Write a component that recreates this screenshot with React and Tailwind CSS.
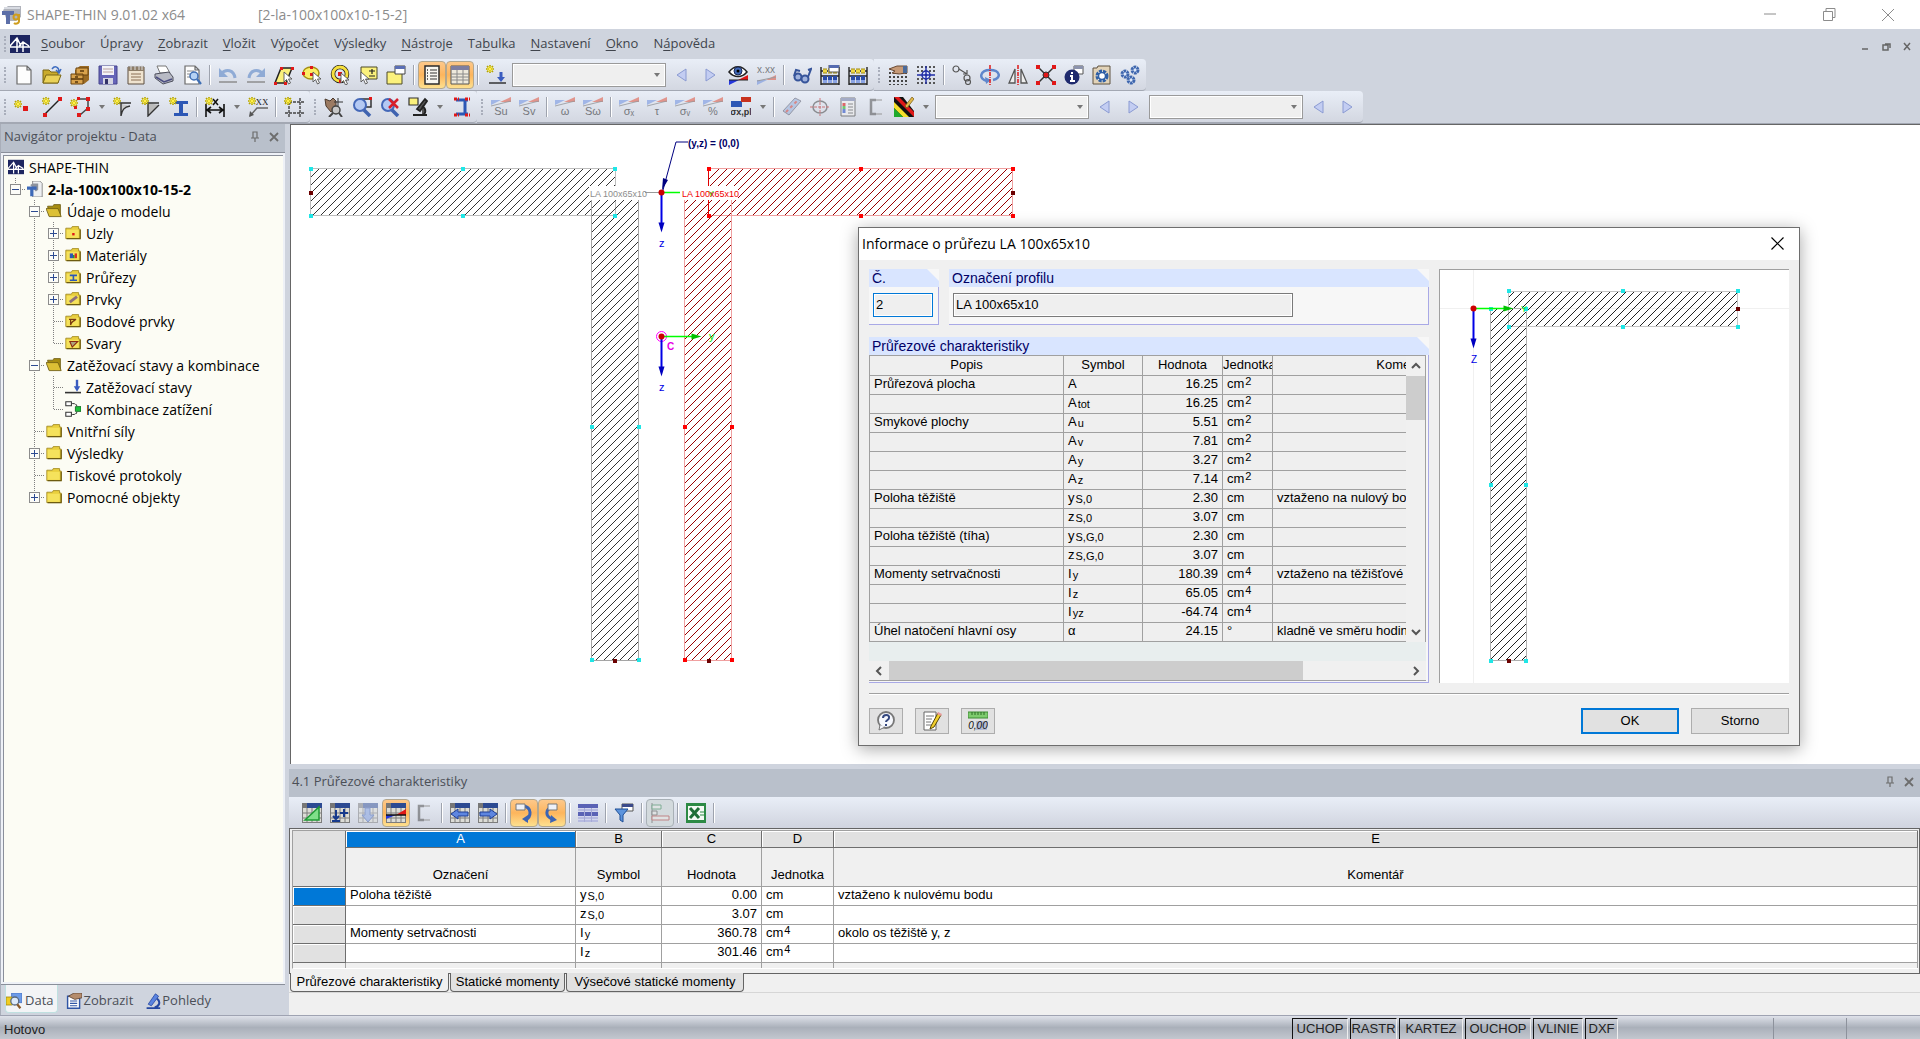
import React from "react";
import clsx from "clsx";

/* ─── ICON ART (20 x 20 grid) ─── */

const Spark = ({ x = 0, y = 0 }) => (
  <g transform={`translate(${x} ${y})`}>
    <path d="M4 0v8M0 4h8M1 1l6 6M7 1L1 7" stroke="#b5a400" strokeWidth="1.6" />
    <path d="M4 1v6M1 4h6M2 2l4 4M6 2L2 6" stroke="#fff04a" strokeWidth="1" />
  </g>
);

const Cursor = ({ x = 10, y = 8 }) => (
  <path
    transform={`translate(${x} ${y})`}
    d="M0 0v10l2.500-2.500L4.500 12l2-1-2-4H8z"
    fill="#fff"
    stroke="#555"
    strokeWidth="0.9"
  />
);

const Sheet = ({ fill = "#fdfdfd" }) => (
  <path d="M3 1h10l4 4v14H3zM13 1v4h4" fill={fill} stroke="#6b6b6b" strokeWidth="1.2" />
);

const Wedge = () => (
  <>
    <path d="M0 8V3h10z" fill="#6d8fe0" />
    <path d="M9 5l11-5v5z" fill="#e0523c" />
    <path d="M0 9l20-5" stroke="#555" strokeWidth="0.8" />
  </>
);

const Result = ({ children }) => (
  <g opacity="0.55">
    <Wedge />
    <text x="10" y="18" textAnchor="middle" fontSize="11" fontFamily="Liberation Sans, sans-serif" fill="#222">
      {children}
    </text>
  </g>
);

const GridBack = ({ y = 6 }) => (
  <path
    d={`M1 ${y}h18M1 ${y + 4}h18M1 ${y + 8}h18M1 ${y + 12}h18`}
    stroke="#444"
    strokeWidth="2"
    strokeDasharray="2 2"
  />
);

const Abacus = () => (
  <>
    <path d="M1 2v18M19 2v18M1 6h18M1 11h18M1 19h18" stroke="#222" strokeWidth="1.400" />
    <path d="M3 6h14" stroke="#a08a10" strokeWidth="5" strokeDasharray="4 1" />
    <path d="M3 6h14" stroke="#f0d848" strokeWidth="3" strokeDasharray="4 1" />
    <path d="M3 13h14" stroke="#2a4ca8" strokeWidth="4" strokeDasharray="4 1" />
    <path d="M3 16.500h14" stroke="#8ba4e4" strokeWidth="3" strokeDasharray="4 1" />
  </>
);

const TableArt = ({ children, faded }) => (
  <g opacity={faded ? 0.5 : 1}>
    <path d="M0 0h20v20H0z" fill="#dcdcd6" />
    <path d="M0 10h20M0 15h20M5 5v15M10 5v15M15 5v15M.5 0v20M19.500 0v20M0 19.500h20" stroke="#7d7d7d" strokeWidth="1" />
    <path d="M0 0h20v5H0z" fill="#2c4a92" />
    <path d="M0 0h5v5H0z" fill="#777" />
    {children}
  </g>
);

const art = {
  newFile: <Sheet />,
  open: (
    <>
      <path d="M1 5h6l2 2h7v11H1z" fill="#c9ab2c" stroke="#7a6714" />
      <path d="M4 10h15l-3 8H1z" fill="#ead258" stroke="#7a6714" />
      <path d="M10 4c3-4 7-2 7 3M14 5l3 3 2-4" fill="none" stroke="#3d6cc0" strokeWidth="1.500" />
    </>
  ),
  blocks: (
    <>
      <path d="M5 5l5-4h9v14l-5 4H5z" fill="#9a6a24" />
      <path d="M1 9h12v10H1zM6 3h12v7H6z" fill="#d9a24c" stroke="#6b4511" />
      <path d="M1 14h12M5 12h3M5 17h3M10 6h4" stroke="#5a390c" strokeWidth="1.300" />
    </>
  ),
  save: (
    <>
      <path d="M1 1h18v18H1z" fill="#6665b8" stroke="#46458d" />
      <path d="M4 1h12v9H4z" fill="#f3f3f8" />
      <path d="M5 4h10M5 7h10" stroke="#b9a0a0" />
      <path d="M5 13h10v6H5z" fill="#d5d5e2" />
      <path d="M7 14h3v5H7z" fill="#333268" />
    </>
  ),
  report: (
    <>
      <path d="M2 2h16v17H2z" fill="#efe3cf" stroke="#5d4f40" />
      <path d="M2 2h16v4H2z" fill="#8d7d68" />
      <path d="M5 0v5M9 0v5M13 0v5M16 0v5" stroke="#ddd" />
      <path d="M5 9h10M5 12h10M5 15h10" stroke="#8a6f55" />
    </>
  ),
  print: (
    <>
      <path d="M3 1h9l4 7H6z" fill="#fff" stroke="#777" />
      <path d="M1 9l14-2 4 5v4l-10 3-8-6z" fill="#b8bac4" stroke="#4d4f5c" />
      <path d="M2 12l8 5 8-3" fill="none" stroke="#4b4d80" strokeWidth="1.500" />
    </>
  ),
  preview: (
    <>
      <Sheet />
      <path d="M5 6h7M5 9h5M5 12h4" stroke="#888" />
      <circle cx="12" cy="11" r="4" fill="#b5d2f4" stroke="#3f6fb5" strokeWidth="1.500" />
      <path d="M15 14l4 5" stroke="#3f6fb5" strokeWidth="2.200" />
    </>
  ),
  undo: (
    <g opacity="0.7">
      <path d="M3 9c5-6 13-4 14 4" fill="none" stroke="#6f94cc" strokeWidth="3" />
      <path d="M1 3v9h9z" fill="#6f94cc" />
      <path d="M1 17h18" stroke="#888" strokeWidth="2" />
    </g>
  ),
  redo: (
    <g opacity="0.7">
      <path d="M17 9C12 3 4 5 3 13" fill="none" stroke="#6f94cc" strokeWidth="3" />
      <path d="M19 3v9h-9z" fill="#6f94cc" />
      <path d="M1 17h18" stroke="#888" strokeWidth="2" />
    </g>
  ),
  selPoly: (
    <>
      <path d="M7 3h11l-6 15H1z" fill="#fbf17c" stroke="#222" strokeWidth="1.500" />
      <path d="M6 2h3v3H6zM17 2h3v3h-3zM0 17h3v3H0zM10 17h3v3h-3z" fill="#e01818" />
      <Cursor x={10} y={7} />
    </>
  ),
  selCircle: (
    <>
      <ellipse cx="9" cy="8" rx="8" ry="6" fill="#fbee65" stroke="#a69012" strokeWidth="1.500" />
      <path d="M8 1h3v3H8zM0 7h3v3H0zM8 8h3v3H8z" fill="#e01818" />
      <Cursor x={11} y={7} />
    </>
  ),
  selRing: (
    <>
      <circle cx="10" cy="9" r="7" fill="none" stroke="#222" strokeWidth="4.500" />
      <circle cx="10" cy="9" r="7" fill="none" stroke="#f6e03d" strokeWidth="3" />
      <path d="M8 7h4v4H8zM9 15h3v3H9z" fill="#e01818" />
      <Cursor x={11} y={8} />
    </>
  ),
  selPlus: (
    <>
      <path d="M3 2h16v12H3z" fill="#fbf17c" stroke="#4c4b2a" />
      <path d="M14 4v5M11 6h6M11 11h6" stroke="#222" strokeWidth="1.200" />
      <Cursor x={3} y={7} />
    </>
  ),
  copyWin: (
    <>
      <path d="M1 7h15v12H1z" fill="#fbf17c" stroke="#4c4b2a" />
      <path d="M9 1h10v8H9z" fill="#fff" stroke="#444" />
      <path d="M9 1h10v3H9z" fill="#5b6fb5" />
    </>
  ),
  navList: (
    <>
      <path d="M3 1h14v18H3z" fill="#f8f6f0" stroke="#2b2b2b" strokeWidth="1.500" />
      <path d="M8 5h7M8 8h7M8 11h7M8 14h7" stroke="#333" />
      <path d="M5 5h1M5 8h1M5 11h1M5 14h1" stroke="#333" strokeWidth="1.500" />
    </>
  ),
  tables: (
    <>
      <path d="M1 1h18v18H1z" fill="#eee9dc" stroke="#555" />
      <path d="M1 1h18v4H1z" fill="#7e7ea0" />
      <path d="M1 9h18M1 12h18M1 15h18M7 5v14M13 5v14" stroke="#8a8a8a" />
    </>
  ),
  newLoad: (
    <>
      <Spark />
      <path d="M15 7v6" stroke="#3a5cc0" strokeWidth="3" />
      <path d="M11 12h8l-4 5z" fill="#3a5cc0" />
      <path d="M3 18h17" stroke="#333" strokeWidth="1.500" />
    </>
  ),
  prev: <path d="M14 4v12L5 10z" fill="#c3cdf2" stroke="#8a9ad2" />,
  next: <path d="M6 4v12l9-6z" fill="#c3cdf2" stroke="#8a9ad2" />,
  showResults: (
    <>
      <path d="M1 7c5-7 13-7 18 0-5 6-13 6-18 0z" fill="#fff" stroke="#222" strokeWidth="1.500" />
      <circle cx="10" cy="6" r="4" fill="#4068b5" stroke="#1c2b5a" />
      <circle cx="10" cy="6" r="1.500" fill="#000" />
      <path d="M1 20v-5h10z" fill="#2436dd" />
      <path d="M10 15l10-5v5z" fill="#e01818" />
      <path d="M1 15h19" stroke="#222" />
    </>
  ),
  values: (
    <g opacity="0.55">
      <text x="10" y="8" textAnchor="middle" fontSize="10" fontFamily="Liberation Sans, sans-serif" fill="#222">x.xx</text>
      <path d="M1 20v-5h10z" fill="#6d8fe0" />
      <path d="M10 15l10-5v5z" fill="#e0523c" />
      <path d="M1 16l19-4" stroke="#666" />
    </g>
  ),
  glasses: (
    <g fill="none" stroke="#36549a" strokeWidth="2">
      <circle cx="6" cy="12" r="3.500" fill="#9fb2dd" />
      <circle cx="13" cy="14" r="3.500" fill="#9fb2dd" />
      <path d="M2 11L4 5l4 1M16 12l3-8-3 1" />
    </g>
  ),
  abacusWin: (
    <>
      <Abacus />
      <path d="M9 0h10v7H9z" fill="#fff" stroke="#555" />
      <path d="M9 0h10v3H9z" fill="#556bb0" />
    </>
  ),
  abacus: <Abacus />,
  gridHand: (
    <>
      <GridBack y={8} />
      <path d="M1 4l8-3 10 0v7l-8 1-7-1 3-2z" fill="#c69a78" stroke="#6b4a34" />
      <path d="M15 1h4v7h-4z" fill="#4a6a9a" />
    </>
  ),
  gridSnap: (
    <>
      <path d="M1 2h18M1 6h18M1 14h18M1 18h18" stroke="#555" strokeWidth="2" strokeDasharray="2 2" />
      <circle cx="10" cy="10" r="4" fill="#dfe4fa" stroke="#1f2da5" strokeWidth="1.500" />
      <path d="M10 1v18M1 10h18" stroke="#1f2da5" strokeWidth="1.400" />
      <circle cx="10" cy="10" r="1.300" fill="#1f2da5" />
    </>
  ),
  moveCopy: (
    <g fill="none" stroke="#555" strokeWidth="1.200">
      <circle cx="4" cy="4" r="3" />
      <circle cx="15" cy="13" r="3" />
      <circle cx="16" cy="17" r="2.500" />
      <path d="M7 4l8 5M15 5v4h-4" />
    </g>
  ),
  rotate: (
    <>
      <path d="M7 16C-2 14 0 5 10 5s12 8 3 10" fill="none" stroke="#5f86cc" strokeWidth="2.500" />
      <path d="M5 12l6 3-5 4z" fill="#5f86cc" />
      <path d="M10 0v20" stroke="#e01818" strokeWidth="1.500" strokeDasharray="4 1 1 1" />
    </>
  ),
  mirror: (
    <>
      <path d="M7 4v14H1zM13 4v14h6z" fill="#eee" stroke="#555" strokeWidth="1.300" />
      <path d="M10 0v20" stroke="#e01818" strokeWidth="1.500" strokeDasharray="4 1 1 1" />
    </>
  ),
  split: (
    <>
      <path d="M2 2l16 16M18 2L2 18" stroke="#333" strokeWidth="1.500" />
      <path d="M0 0h4v4H0zM16 0h4v4h-4zM0 16h4v4H0zM16 16h4v4h-4z" fill="#e01818" />
      <circle cx="10" cy="10" r="3" fill="#e01818" stroke="#333" />
    </>
  ),
  info: (
    <>
      <path d="M10 1h9v8h-9z" fill="#fff" stroke="#555" />
      <path d="M10 1h9v3h-9z" fill="#8c93ad" />
      <circle cx="8" cy="12" r="7.500" fill="#1f2a6e" />
      <path d="M8 7v2M6 11h2v5M6 16h5" stroke="#fff" strokeWidth="2" fill="none" />
    </>
  ),
  settings: (
    <>
      <path d="M1 3h4l1-2h12v18H1z" fill="#e2d3b8" stroke="#5f5240" />
      <circle cx="10" cy="11" r="5" fill="#fff" stroke="#2f5fa5" strokeWidth="3" strokeDasharray="3 1" />
      <circle cx="10" cy="11" r="3.500" fill="none" stroke="#2f5fa5" strokeWidth="1.500" />
    </>
  ),
  gears: (
    <g fill="#dfe9fa" stroke="#3e66ae">
      <circle cx="5" cy="9" r="3" strokeWidth="3" strokeDasharray="2.500 0.600" />
      <circle cx="15" cy="5" r="3" strokeWidth="3" strokeDasharray="2.500 0.600" />
      <circle cx="11" cy="15" r="3" strokeWidth="3" strokeDasharray="2.500 0.600" />
    </g>
  ),
  newNode: (
    <>
      <Spark y={3} />
      <path d="M9 9h5v5H9z" fill="#e01818" />
    </>
  ),
  newLine: (
    <>
      <path d="M3 17L18 2" stroke="#222" strokeWidth="1.500" />
      <Spark />
      <path d="M1 16h4v4H1zM16 0h4v4h-4z" fill="#e01818" />
    </>
  ),
  newPoly: (
    <>
      <path d="M9 2h9v9l-8 7" fill="none" stroke="#444" strokeWidth="1.500" />
      <Spark y={2} />
      <path d="M7 0h3v3H7zM16 0h4v4h-4zM16 10h4v4h-4zM7 16h4v4H7zM4 9h3v3H4z" fill="#e01818" />
    </>
  ),
  newPoint: (
    <>
      <path d="M5 6h13M5 6h3v13c1-6 3-9 9-10" fill="#ccc" stroke="#333" strokeWidth="1.400" />
      <Spark />
    </>
  ),
  newWeld: (
    <>
      <path d="M3 6h15M7 6v13L18 8" fill="#bbb" stroke="#333" strokeWidth="1.400" />
      <Spark />
    </>
  ),
  newSection: (
    <>
      <path d="M5 4h14v3h-5v9h5v3H5v-3h5V7H5z" fill="#2c57b5" />
      <Spark />
    </>
  ),
  dimension: (
    <>
      <path d="M1 7v13M19 7v13M2 13h16M6 10l-4 3 4 3M14 10l4 3-4 3" fill="none" stroke="#111" strokeWidth="1.600" />
      <path d="M8 2l5 6M13 2L8 8" stroke="#111" strokeWidth="1.500" />
      <Spark />
    </>
  ),
  comment: (
    <>
      <path d="M2 19L9 11h11" fill="none" stroke="#666" strokeWidth="1.400" />
      <path d="M1 20l1-6 4 4z" fill="#555" />
      <text x="14" y="8" textAnchor="middle" fontSize="9" fontFamily="Liberation Serif, serif" fill="#222">XX</text>
      <Spark />
    </>
  ),
  guide: (
    <>
      <path d="M5 1v19M16 1v19M1 5h19M1 16h19" stroke="#444" strokeWidth="1.400" strokeDasharray="3 1" />
      <Spark />
    </>
  ),
  zoomHand: (
    <>
      <path d="M1 2l5 2 3-3 3 3v8l-5 3-5-6z" fill="#9b7a62" stroke="#4d3b2e" />
      <path d="M14 1v9M10 5h9" stroke="#333" />
      <circle cx="12" cy="13" r="4" fill="#c8c8c8" stroke="#444" strokeWidth="1.500" />
      <path d="M15 16l3 4M9 16l-4 4" stroke="#444" strokeWidth="2" />
    </>
  ),
  zoomWindow: (
    <>
      <path d="M9 2h10v8H9z" fill="none" stroke="#333" strokeWidth="1.500" />
      <circle cx="8" cy="8" r="6" fill="#b4c9f3" stroke="#4468b8" strokeWidth="2" />
      <path d="M12 13l6 6" stroke="#3f63b0" strokeWidth="3.500" />
      <path d="M17 0h3v3h-3z" fill="#e01818" />
    </>
  ),
  zoomAll: (
    <>
      <circle cx="8" cy="8" r="6" fill="#b4c9f3" stroke="#4468b8" strokeWidth="2" />
      <path d="M12 13l6 6" stroke="#3f63b0" strokeWidth="3.500" />
      <path d="M9 2l9 9M18 2L9 11" stroke="#d81f2a" strokeWidth="2.500" />
    </>
  ),
  microscope: (
    <>
      <path d="M1 1h9v7H1z" fill="#fbf17c" stroke="#333" strokeWidth="1.200" />
      <path d="M9 12l8-10 2 2-7 10zM14 9c5 3 4 8 0 9M5 18h14" fill="#555" stroke="#222" strokeWidth="1.800" />
    </>
  ),
  sectionRed: (
    <>
      <path d="M5 3h12M5 17h12M14 3v14" stroke="#2c57b5" strokeWidth="3" />
      <path d="M3 2h5M14 2h5M3 18h5M14 18h5" stroke="#e01818" strokeWidth="3" strokeDasharray="3 1" />
    </>
  ),
  su: <Result>Su</Result>,
  sv: <Result>Sv</Result>,
  omega: <Result>ω</Result>,
  sOmega: <Result>Sω</Result>,
  sigmaX: <Result>σₓ</Result>,
  tau: <Result>τ</Result>,
  sigmaV: <Result>σᵥ</Result>,
  percent: <Result>%</Result>,
  sigmaPl: (
    <>
      <path d="M0 4h11v6H0z" fill="#2c57b5" />
      <path d="M10 0h10v5H10z" fill="#c8321e" />
      <text x="10" y="18" textAnchor="middle" fontSize="9" fontWeight="bold" fontFamily="Liberation Sans, sans-serif" fill="#333">
        σx,pl
      </text>
    </>
  ),
  element: (
    <g opacity="0.6">
      <path d="M1 14L13 1l6 3L7 18z" fill="#9cb4dc" stroke="#667" />
      <path d="M4 15L16 3" stroke="#d14a42" strokeWidth="2" strokeDasharray="3 3" />
    </g>
  ),
  target: (
    <g opacity="0.6" fill="none" stroke="#555">
      <ellipse cx="10" cy="10" rx="7" ry="6" strokeWidth="1.500" />
      <path d="M10 1v18M0 10h20" stroke="#c03030" strokeDasharray="3 1" />
    </g>
  ),
  legend: (
    <g opacity="0.7">
      <path d="M3 1h14v18H3z" fill="#eee" stroke="#555" />
      <path d="M3 1h14v3H3z" fill="#8a93b5" />
      <path d="M6 6v3" stroke="#d33" strokeWidth="3" />
      <path d="M6 9v3" stroke="#4b4" strokeWidth="3" />
      <path d="M6 12v4" stroke="#46c" strokeWidth="3" />
      <path d="M10 7h5M10 10h5M10 13h5M10 16h5" stroke="#666" />
    </g>
  ),
  channel: (
    <g opacity="0.5">
      <path d="M10 3H5v14h5" fill="none" stroke="#444" strokeWidth="2.500" />
      <path d="M10 3h6M10 17h6" stroke="#999" strokeWidth="2" />
    </g>
  ),
  colors: (
    <>
      <path d="M0 0h20v20H0z" fill="#111" />
      <path d="M0 0h5l15 15v5z" fill="#e01818" />
      <path d="M0 5l15 15H9L0 11z" fill="#f5e02c" />
      <path d="M0 11l9 9H0z" fill="#1faa2c" />
      <path d="M9 0h11v14z" fill="#e4e7ef" />
      <path d="M11 9l7-9 2 2-7 9z" fill="#e0b84a" stroke="#765a14" strokeWidth="0.700" />
    </>
  ),
  tblEdit: <TableArt><path d="M3 17L17 4v13z" fill="#7fe08a" stroke="#1f9a35" strokeWidth="1.500" /></TableArt>,
  tblInsert: (
    <TableArt>
      <path d="M6 7v9M3 13l3 3 3-3M2 18h8M14 6v8M10 10h8" stroke="#173a8c" strokeWidth="2" fill="none" />
    </TableArt>
  ),
  tblDown: <TableArt faded><path d="M7 5h5v7h4l-6 7-6-7h3z" fill="#7f9de0" stroke="#3f5fae" /></TableArt>,
  tblGraph: (
    <TableArt>
      <path d="M0 16v-4h10z" fill="#2436dd" />
      <path d="M10 12l10-6v6z" fill="#e01818" />
      <path d="M0 12h20" stroke="#111" strokeWidth="1.500" />
    </TableArt>
  ),
  tblPrev: <TableArt><path d="M1 11l7-5v3h10v4H8v3z" fill="#5e86e0" stroke="#1f3f96" /></TableArt>,
  tblNext: <TableArt><path d="M19 11l-7-5v3H2v4h10v3z" fill="#5e86e0" stroke="#1f3f96" /></TableArt>,
  syncIn: (
    <>
      <path d="M9 3c9 1 9 11 2 14" fill="none" stroke="#3c64b4" strokeWidth="3" />
      <path d="M14 12l-6 4 6 4z" fill="#3c64b4" />
      <path d="M2 1h9v6H2z" fill="#eef1f8" stroke="#777" />
    </>
  ),
  syncOut: (
    <>
      <path d="M11 4c-8 2-8 9-1 12" fill="none" stroke="#3c64b4" strokeWidth="3" />
      <path d="M8 20l7-3-6-5z" fill="#3c64b4" />
      <path d="M6 1h9v6H6z" fill="#eef1f8" stroke="#777" />
    </>
  ),
  rows: (
    <>
      <path d="M0 1h20v18H0z" fill="#d3d6ee" />
      <path d="M0 3h20M0 11h20" stroke="#5a62b5" strokeWidth="4" />
      <path d="M0 7h20M0 15h20M0 18h20" stroke="#9a9fd2" />
      <path d="M6.500 5v14M13.500 5v14" stroke="#a6aad6" />
    </>
  ),
  filter: (
    <>
      <path d="M8 1h11v7H8z" fill="#fff" stroke="#555" />
      <path d="M8 1h11v3H8z" fill="#3b4a8a" />
      <path d="M1 6h13l-5 6v7l-3-2v-5z" fill="#5c93dc" stroke="#1f4f96" />
    </>
  ),
  bars: (
    <g opacity="0.55" fill="#e9e9e9" stroke="#555">
      <path d="M2 0v20" />
      <path d="M2 2h9v4H2z" stroke="#3a8a5a" />
      <path d="M2 8h5v4H2z" />
      <path d="M2 13h17v4H2z" stroke="#b04040" />
    </g>
  ),
  excel: (
    <>
      <path d="M0 0h20v20H0z" fill="#2c8a45" />
      <path d="M2 3h16v14H2z" fill="#f4faf4" />
      <path d="M4 5l9 10M13 5L4 15" stroke="#1e6f36" strokeWidth="3" />
      <path d="M14 9h4M14 12h4" stroke="#2c8a45" />
    </>
  ),
  help: (
    <>
      <circle cx="10" cy="9" r="8" fill="#f5f7fc" stroke="#777" strokeWidth="1.800" />
      <path d="M4 14l-1 5 6-3" fill="#f5f7fc" stroke="#777" />
      <path d="M7 7c0-4 7-4 6 0 0 2-3 2-3 4M10 13v2" fill="none" stroke="#33477f" strokeWidth="2" />
    </>
  ),
  note: (
    <>
      <path d="M2 1h12v18H2z" fill="#fff" stroke="#666" />
      <path d="M4 5h8M4 8h6M4 11h5M4 14h6" stroke="#777" />
      <path d="M9 15L16 2l3 2-7 12-4 2z" fill="#f2cf2c" stroke="#57480a" />
      <path d="M16 1l4 2-1 2-4-2z" fill="#e79a9a" />
    </>
  ),
  units: (
    <>
      <path d="M0 1h20v6H0z" fill="#7ecb6e" stroke="#3d8c33" />
      <path d="M4 1v3M7 1v3M10 1v3M13 1v3M16 1v3" stroke="#2d6d25" />
      <path d="M8 10h11v9H8z" fill="#b4bbd6" />
      <text x="10" y="18" textAnchor="middle" fontSize="10" fontStyle="italic" fontFamily="Liberation Sans, sans-serif" fill="#111">
        0,00
      </text>
    </>
  ),
  bridge: (
    <>
      <path d="M0 1h20v18H0z" fill="#1d2560" />
      <path d="M0 13h20M7 4v14M0 12L7 4l4 8M13 8v10M9 12l4-4 6 4" fill="none" stroke="#fff" strokeWidth="1.500" />
    </>
  ),
  app: (
    <>
      <path d="M1 5l5-4h13v11l-5 4H5z" fill="#b0b3bb" />
      <path d="M0 6h12v4H8v9H4v-9H0z" fill="#5c6fa8" />
      <path d="M2 3h16" stroke="#d8dbe2" strokeWidth="2" />
      <circle cx="14" cy="12" r="2.500" stroke="#cf9d1c" strokeWidth="2" />
      <path d="M17 9v7c0 3-4 3-5 2" stroke="#cf9d1c" strokeWidth="2" />
    </>
  ),
  doc: (
    <>
      <path d="M7 0h9l3 3v17H7z" fill="#eef0f2" stroke="#777" />
      <path d="M4 5l3-2h7v8l-3 2z" fill="#8e939c" />
      <path d="M0 7h12v4H8v8H4v-8H0z" fill="#3d69b8" />
    </>
  ),
  folder: (
    <>
      <path d="M1 4h7l1-2h8v3h2v12H1z" fill="#e9cf3e" stroke="#9c8318" />
      <path d="M2 6h15v10H2z" fill="#f5e25c" />
      <path d="M2 17h17V6" fill="none" stroke="#6d5b10" strokeWidth="1.500" />
    </>
  ),
  folderOpen: (
    <>
      <path d="M2 4h6l2-2h8v14H4z" fill="#a68c10" stroke="#6a5910" />
      <path d="M0 7h15l4 10H4z" fill="#dcc035" stroke="#6a5910" />
    </>
  ),
  loadCase: (
    <>
      <path d="M15 1v9" stroke="#3a5cc0" strokeWidth="3" />
      <path d="M11 9h8l-4 7z" fill="#3a5cc0" />
      <path d="M0 17h20" stroke="#333" strokeWidth="2" />
    </>
  ),
  loadCombo: (
    <>
      <path d="M1 1h7v5H1zM1 14h7v5H1z" fill="#fff" stroke="#333" strokeWidth="1.300" />
      <path d="M9 3c4 0 6 2 6 4M9 17c4 0 6-2 6-4" fill="none" stroke="#333" strokeWidth="1.300" strokeDasharray="3 1" />
      <path d="M13 7h7v6h-7z" fill="#1fc03a" stroke="#0c5f1a" />
    </>
  ),
  navData: (
    <>
      <path d="M7 0h13v12H7z" fill="#6d9be8" stroke="#4470c0" />
      <path d="M0 5h8v10H0z" fill="#f0cd22" stroke="#a08510" />
      <circle cx="11" cy="10" r="5" fill="#dceafa" stroke="#5a6a80" strokeWidth="1.600" />
      <path d="M14 14l4 5" stroke="#8a5a2a" strokeWidth="2.800" />
    </>
  ),
  navDisplay: (
    <>
      <path d="M2 4h15v15H2z" fill="#fff" stroke="#2f55a5" strokeWidth="1.800" />
      <path d="M5 10h9M5 13h9M5 16h9" stroke="#2f55a5" strokeWidth="1.400" />
      <path d="M3 4l7-4h10v6l-9 2z" fill="#b58c6c" stroke="#5a4030" />
    </>
  ),
  navViews: (
    <>
      <path d="M4 14L13 1l4 3-9 12z" fill="#5a83e0" stroke="#2446a0" />
      <path d="M15 7c5 4 3 10-3 11M2 19h17" fill="none" stroke="#2446a0" strokeWidth="2.500" />
    </>
  ),
};

const folderMarks = {
  node: <path d="M9 10h3v3H9z" fill="#e01818" />,
  material: (
    <>
      <path d="M6 8h4v6H6z" fill="#2c57b5" />
      <path d="M10 10h2v4h-2z" fill="#1f9a35" />
      <path d="M12 8h3v6h-3z" fill="#d8321e" />
    </>
  ),
  section: <path d="M6 8h9M6 14h9M10.500 8v6" stroke="#2c57b5" strokeWidth="2" />,
  element: <path d="M6 14L15 7" stroke="#8d6f7c" strokeWidth="3.500" />,
  point: <path d="M5 8h9M7 8v7c1-4 3-5 6-6" fill="none" stroke="#7a3a10" strokeWidth="1.600" />,
  weld: <path d="M6 8h10L9 15z" fill="#b0a27c" stroke="#8a2a10" strokeWidth="1.300" />,
};

function Icon({ name, mark, small }) {
  return (
    <svg viewBox="0 0 20 20" className={clsx("shrink-0", small ? "size-4" : "size-5")} fill="none" aria-hidden="true">
      {art[name]}
      {mark && folderMarks[mark]}
    </svg>
  );
}

/* ─── TOOLBARS ─── */

const fileTools = [
  "grip", ["newFile", "Nový"], ["open", "Otevřít"], ["blocks", "Správce bloků"], ["save", "Uložit"],
  ["report", "Tiskový protokol"], ["print", "Tisk"], ["preview", "Náhled"], "sep",
  ["undo", "Zpět"], ["redo", "Znovu"], ["selPoly", "Výběr polygonem"], ["selCircle", "Výběr elipsou"],
  ["selRing", "Výběr prstencem"], ["selPlus", "Přidat k výběru"], ["copyWin", "Nové okno"], "sep",
  ["navList", "Navigátor", true], ["tables", "Tabulky", true], "sep",
  ["newLoad", "Nový zatěžovací stav"], { select: "Zatěžovací stav" }, ["prev", "Předchozí stav"], ["next", "Další stav"],
  ["showResults", "Zobrazit výsledky"], ["values", "Zobrazit hodnoty"], "sep",
  ["glasses", "Kontrola"], ["abacusWin", "Parametry výpočtu"], ["abacus", "Spočítat"],
];

const editTools = [
  "grip", ["gridHand", "Rastr"], ["gridSnap", "Uchopení"], "sep",
  ["moveCopy", "Posunout"], ["rotate", "Otočit"], ["mirror", "Zrcadlit"], ["split", "Rozdělit"],
  ["info", "Informace"], ["settings", "Nastavení zobrazení"], ["gears", "Možnosti"],
];

const drawTools = [
  "grip", ["newNode", "Nový uzel"], ["newLine", "Nový prvek"], ["newPoly", "Nová polylinie"], "drop",
  ["newPoint", "Nový bodový prvek"], ["newWeld", "Nový svar"], ["newSection", "Nový průřez"], "sep",
  ["dimension", "Kóta"], "drop", ["comment", "Komentář"], "sep", ["guide", "Vodicí linie"],
];

const viewTools = [
  "grip", ["zoomHand", "Posun a zoom"], ["zoomWindow", "Zoom oknem"], ["zoomAll", "Zobrazit vše"],
  ["microscope", "Pohled"], "drop", ["sectionRed", "Průřez"],
];

const resultTools = [
  "grip", ["su", "Su"], ["sv", "Sv"], "sep", ["omega", "Omega"], ["sOmega", "S omega"], "sep",
  ["sigmaX", "Sigma x"], ["tau", "Tau"], ["sigmaV", "Sigma v"], ["percent", "Využití"],
  ["sigmaPl", "Sigma x,pl"], "drop", "sep",
  ["element", "Prvky"], ["target", "Těžiště"], ["legend", "Legenda"], ["channel", "Obrys"], ["colors", "Barvy"], "drop",
  { select: "Výsledky" }, ["prev", "Předchozí výsledek"], ["next", "Další výsledek"],
  { select: "Místo" }, ["prev", "Předchozí místo"], ["next", "Další místo"],
];

const tableTools = [
  "pad", ["tblEdit", "Upravit"], ["tblInsert", "Vložit řádek"], ["tblDown", "Dolů"], ["tblGraph", "Grafika", true],
  ["channel", "Obrys profilu"], "sep", ["tblPrev", "Předchozí tabulka"], ["tblNext", "Další tabulka"], "sep",
  ["syncIn", "Synchronizace výběru", true], ["syncOut", "Synchronizace grafiky", true], "sep",
  ["rows", "Řádky"], "sep", ["filter", "Filtr"], "sep", ["bars", "Sloupce", "pressed"], "sep",
  ["excel", "Export do Excelu"], "sep",
];

function ToolItem({ item }) {
  if (item === "pad") return <div className="w-[9px]" />;
  if (item === "grip") {
    return <div className="ml-1 mr-1 h-4 w-0 border-l-2 border-dotted border-[#a9aebb]" />;
  }
  if (item === "sep") {
    return (
      <div className="flex w-2 justify-center">
        <div className="h-5 w-[2px] border-l border-[#9ea3ae] bg-white" />
      </div>
    );
  }
  if (item === "drop") {
    return (
      <button aria-label="Další volby" className="flex w-[15px] justify-center">
        <svg viewBox="0 0 6 4" className="h-1 w-1.5"><path d="M0 0h6L3 4z" fill="#777" /></svg>
      </button>
    );
  }
  if (item.select) {
    return (
      <div className="relative mx-0.5">
        <select
          aria-label={item.select}
          className="block h-6 w-[154px] appearance-none border border-[#9a9a9a] bg-[#efefef] shadow-[inset_0_0_0_1px_#fff]"
        />
        <svg viewBox="0 0 6 4" className="pointer-events-none absolute right-1.5 top-2.5 h-1 w-1.5">
          <path d="M0 0h6L3 4z" fill="#777" />
        </svg>
      </div>
    );
  }
  const [name, label, state] = item;
  return (
    <button
      aria-label={label}
      className={clsx(
        "flex h-7 w-7 items-center justify-center",
        state === true && "rounded-sm border border-[#b3a78e] bg-linear-to-b from-[#fdc88a] via-[#fdb55c] to-[#fde08e]",
        state === "pressed" && "rounded-sm border border-[#a8b0b6] bg-[#d3dadd]"
      )}
    >
      <Icon name={name} />
    </button>
  );
}

function Toolbar({ items }) {
  return (
    <div className="flex h-full items-center rounded-r border-b border-[#a3a8b3] bg-linear-to-b from-[#e9eef7] to-[#d3d7e1] pr-0.5">
      {items.map((item, i) => (
        <ToolItem key={i} item={item} />
      ))}
    </div>
  );
}

/* ─── MENU ─── */

const menu = [
  ["", "S", "oubor"], ["Úpr", "a", "vy"], ["", "Z", "obrazit"], ["", "V", "ložit"], ["Vý", "p", "očet"],
  ["Výsle", "d", "ky"], ["", "N", "ástroje"], ["Ta", "b", "ulka"], ["", "N", "astavení"], ["", "O", "kno"],
  ["N", "á", "pověda"],
];

function TitleBar() {
  return (
    <header className="flex h-[29px] items-center bg-white pl-0.5 text-[14px] text-[#8c8c8c]">
      <Icon name="app" />
      <span className="ml-[5px] w-[231px] whitespace-nowrap">SHAPE-THIN 9.01.02 x64</span>
      <span>[2-la-100x100x10-15-2]</span>
      <div className="ml-auto flex pr-[25px]">
        {[
          ["Minimalizovat", "M0 6h12"],
          ["Obnovit", "M.5 3.500h9v9h-9zM3 3V.5h9v9H10"],
          ["Zavřít", "M0 1l12 12M12 1L0 13"],
        ].map(([label, d]) => (
          <button key={label} aria-label={label} className="ml-[46px] h-[14px] w-[13px]">
            <svg viewBox="0 0 13 14" className="h-[14px] w-[13px]"><path d={d} fill="none" stroke="#8c8c8c" /></svg>
          </button>
        ))}
      </div>
    </header>
  );
}

function MenuBar() {
  return (
    <nav className="flex h-[30px] items-center bg-[#cfd4de] text-[13px] text-[#40444c]">
      <div className="ml-1 mr-1 h-4 border-l-2 border-dotted border-[#a9aebb]" />
      <Icon name="bridge" />
      <div className="ml-[11px] flex gap-[15px]">
        {menu.map(([a, b, c]) => (
          <button key={a + b + c}>
            {a}
            <span className="underline underline-offset-2">{b}</span>
            {c}
          </button>
        ))}
      </div>
      <div className="ml-auto flex gap-3 pr-2 pt-1">
        {[
          ["Minimalizovat okno", "M1 7h6"],
          ["Obnovit okno", "M1 3h5v5H1zM3 2h5v4"],
          ["Zavřít okno", "M1 1l6 7M7 1L1 8"],
        ].map(([label, d]) => (
          <button key={label} aria-label={label} className="size-[9px]">
            <svg viewBox="0 0 9 9" className="size-[9px]"><path d={d} fill="none" stroke="#666" strokeWidth="1.500" /></svg>
          </button>
        ))}
      </div>
    </nav>
  );
}

function PanelHeader({ title }) {
  return (
    <div className="flex h-7 shrink-0 items-center bg-[#b9c0cb] pb-0.5 pl-[3px] pr-[5px] text-[13px] text-[#4b4f57]">
      <h2>{title}</h2>
      <button aria-label="Připnout" className="ml-auto">
        <svg viewBox="0 0 10 12" className="h-3 w-2.5">
          <path d="M3 1h4v6H3zM1 7h8M5 7v4M7 1v6" fill="none" stroke="#6d6d6d" strokeWidth="1.200" />
        </svg>
      </button>
      <button aria-label="Zavřít panel" className="ml-2">
        <svg viewBox="0 0 12 12" className="size-3"><path d="M2 2l8 8M10 2l-8 8" stroke="#6d6d6d" strokeWidth="1.800" /></svg>
      </button>
    </div>
  );
}

/* ─── NAVIGATOR ─── */

// g: one guide per level ("|" line, "T" branch, "L" last branch, "+"/"-" expander, "x" last expander, " " blank)
const tree = [
  { g: "", icon: "bridge", label: "SHAPE-THIN" },
  { g: "-", icon: "doc", label: "2-la-100x100x10-15-2", bold: true },
  { g: " -", icon: "folderOpen", label: "Údaje o modelu" },
  { g: " |+", icon: "folder", mark: "node", label: "Uzly" },
  { g: " |+", icon: "folder", mark: "material", label: "Materiály" },
  { g: " |+", icon: "folder", mark: "section", label: "Průřezy" },
  { g: " |+", icon: "folder", mark: "element", label: "Prvky" },
  { g: " |T", icon: "folder", mark: "point", label: "Bodové prvky" },
  { g: " |L", icon: "folder", mark: "weld", label: "Svary" },
  { g: " -", icon: "folderOpen", label: "Zatěžovací stavy a kombinace" },
  { g: " |T", icon: "loadCase", label: "Zatěžovací stavy" },
  { g: " |L", icon: "loadCombo", label: "Kombinace zatížení" },
  { g: " T", icon: "folder", label: "Vnitřní síly" },
  { g: " +", icon: "folder", label: "Výsledky" },
  { g: " T", icon: "folder", label: "Tiskové protokoly" },
  { g: " x", icon: "folder", label: "Pomocné objekty" },
];

function Guide({ type, root }) {
  const box = "+-x".includes(type);
  const end = type === "L" || type === "x" || root;
  return (
    <svg viewBox="0 0 19 22" className="h-[22px] w-[19px] shrink-0" shapeRendering="crispEdges" aria-hidden="true">
      {type !== " " && (
        <path d={end ? "M7.500 0v11" : "M7.500 0v22"} stroke="#808080" strokeDasharray="1 1" />
      )}
      {type !== " " && type !== "|" && <path d="M8 11.500h10" stroke="#808080" strokeDasharray="1 1" />}
      {box && (
        <>
          <rect x="2.500" y="6.500" width="10" height="10" fill="#fcfcf8" stroke="#8c8c8c" />
          <path d={type === "-" ? "M4 11.500h7" : "M4 11.500h7M7.500 8v7"} stroke="#2c4a92" />
        </>
      )}
    </svg>
  );
}

function Navigator() {
  return (
    <aside className="flex w-[285px] shrink-0 flex-col border-l border-[#a9aeb9]">
      <PanelHeader title="Navigátor projektu - Data" />
      <div className="flex-1 overflow-hidden border-b border-t border-[#8a8f9a] bg-[#eef1f7] p-0.5">
        <ul className="h-full border-l border-t border-[#8a8f9a] bg-[#fcfcf4] pl-1 text-[14px] text-black">
          {tree.map((row) => (
            <li key={row.label} className="flex h-[22px] items-center whitespace-nowrap">
              {row.g.split("").map((type, i) => (
                <Guide key={i} type={type} root={i === 0} />
              ))}
              <Icon name={row.icon} mark={row.mark} small />
              <span className={clsx("ml-[5px]", row.bold && "font-bold")}>{row.label}</span>
            </li>
          ))}
        </ul>
      </div>
      <div className="flex h-[30px] shrink-0 items-start text-[13px] text-[#4b4f57]">
        <button className="ml-1 flex h-7 items-center rounded-b border border-t-0 border-[#bfe0e0] bg-[#f3f4f6] pr-[3px] pt-1">
          <Icon name="navData" small />
          <span className="ml-[3px]">Data</span>
        </button>
        <button className="ml-2 flex h-7 items-center pt-1"><Icon name="navDisplay" small /><span className="ml-0.5">Zobrazit</span></button>
        <button className="ml-3 flex h-7 items-center pt-1"><Icon name="navViews" small /><span className="ml-px">Pohledy</span></button>
      </div>
    </aside>
  );
}

/* ─── SECTION DRAWINGS ─── */

function Hatch({ id, color }) {
  return (
    <pattern id={id} width="8" height="8" patternUnits="userSpaceOnUse">
      <path d="M-2 2l4-4M0 8l8-8M6 10l4-4" stroke={color} strokeWidth="1" />
    </pattern>
  );
}

function Plate({ x, y, w, h, hatch, line }) {
  return (
    <>
      <rect x={x} y={y} width={w} height={h} fill={`url(#${hatch})`} shapeRendering="crispEdges" />
      <rect x={x} y={y} width={w} height={h} fill="none" stroke={line} />
    </>
  );
}

function Handles({ points, color }) {
  return points.map(([x, y]) => <rect key={`${x}-${y}`} x={x - 2} y={y - 2} width="4" height="4" fill={color} />);
}

function Axes({ x, y, len = 40 }) {
  return (
    <>
      <path d={`M${x} ${y}h${len - 8}`} stroke="#00ff00" strokeWidth="1.500" />
      <path d={`M${x + len} ${y}l-10-3v6z`} fill="#00c000" />
      <path d={`M${x} ${y}v${len - 8}`} stroke="#0000e6" strokeWidth="2" />
      <path d={`M${x} ${y + len}l-3-10h6z`} fill="#0000c0" />
      <circle cx={x} cy={y} r="3" fill="#cc0000" />
    </>
  );
}

function ModelDrawing() {
  return (
    <svg className="block h-full w-full" fontFamily="Liberation Sans, sans-serif">
      <defs>
        <Hatch id="hatch-gray" color="#333" />
        <Hatch id="hatch-red" color="#990000" />
      </defs>
      <Plate x={19.5} y={43.5} w={305} h={47} hatch="hatch-gray" line="#bdbdbd" />
      <Plate x={300.5} y={67.5} w={47} h={468} hatch="hatch-gray" line="#a5a5a5" />
      <Plate x={417.5} y={43.5} w={304} h={47} hatch="hatch-red" line="#f0a0a0" />
      <Plate x={393.5} y={67.5} w={47} h={468} hatch="hatch-red" line="#f0a0a0" />
      <path d="M417.500 44v47" stroke="#e00000" />

      <Handles
        color="#20e6e6"
        points={[[20, 44], [172, 44], [324, 44], [20, 91], [172, 91], [324, 91], [301, 302], [348, 302], [301, 535], [348, 535]]}
      />
      <Handles
        color="#ff0000"
        points={[[418, 44], [570, 44], [722, 44], [418, 91], [570, 91], [722, 91], [394, 302], [441, 302], [394, 535], [441, 535]]}
      />
      <Handles color="#6b0000" points={[[20, 68], [722, 68], [324, 536], [418, 536]]} />

      <path d="M354 67.500h16" stroke="#999" />
      <Axes x={370.5} y={67.5} />
      <rect x="298" y="61" width="56" height="14" fill="#fff" />
      <text x="299" y="72" fontSize="9" fill="#8c8c8c">LA 100x65x10</text>
      <rect x="389" y="61" width="58" height="14" fill="#fff" />
      <text x="417" y="72" fontSize="9" fill="#00e600">Y</text>
      <text x="391" y="72" fontSize="9" fill="#f00000">LA 100x65x10</text>

      <path d="M372 65l13-48h12" fill="none" stroke="#000080" />
      <path d="M371 65l1-12 5 2z" fill="#000080" />
      <text x="397" y="22" fontSize="10" fontWeight="bold" fill="#000066">(y,z) = (0,0)</text>
      <text x="368" y="122" fontSize="11" fill="#0000e6">z</text>

      <circle cx="370.500" cy="211.500" r="5" fill="none" stroke="#ff00ff" />
      <Axes x={370.5} y={211.5} />
      <text x="418" y="215" fontSize="11" fill="#00e600">y</text>
      <text x="376" y="225" fontSize="10" fontWeight="bold" fill="#e600e6">C</text>
      <text x="368" y="266" fontSize="11" fill="#0000e6">z</text>
    </svg>
  );
}

function PreviewDrawing() {
  return (
    <svg className="block h-full w-full" fontFamily="Liberation Sans, sans-serif">
      <defs>
        <Hatch id="hatch-preview" color="#222" />
      </defs>
      <path d="M33.500 0v420M0 38.500h420" stroke="#f0f0f0" />
      <Plate x={68.5} y={21.5} w={229} h={35} hatch="hatch-preview" line="#c4c4c4" />
      <Plate x={50.5} y={38.5} w={36} h={352} hatch="hatch-preview" line="#b0b0b0" />
      <Handles
        color="#20e6e6"
        points={[[69, 21], [183, 21], [298, 21], [69, 57], [183, 57], [298, 57], [51, 39], [86, 39], [51, 215], [86, 215], [51, 391], [86, 391]]}
      />
      <Handles color="#6b0000" points={[[298, 39], [69, 391]]} />
      <Axes x={33.5} y={38.5} />
      <text x="81" y="42" fontSize="9" fill="#00e600">Y</text>
      <text x="31" y="93" fontSize="10" fill="#0000e6">Z</text>
    </svg>
  );
}

/* ─── SECTION INFO DIALOG ─── */

const sectionRows = [
  ["Průřezová plocha", "A", "", "16.25", "cm", "2"],
  ["", "A", "tot", "16.25", "cm", "2"],
  ["Smykové plochy", "A", "u", "5.51", "cm", "2"],
  ["", "A", "v", "7.81", "cm", "2"],
  ["", "A", "y", "3.27", "cm", "2"],
  ["", "A", "z", "7.14", "cm", "2"],
  ["Poloha těžiště", "y", "S,0", "2.30", "cm", "", "vztaženo na nulový bod"],
  ["", "z", "S,0", "3.07", "cm", ""],
  ["Poloha těžiště (tíha)", "y", "S,G,0", "2.30", "cm", ""],
  ["", "z", "S,G,0", "3.07", "cm", ""],
  ["Momenty setrvačnosti", "I", "y", "180.39", "cm", "4", "vztaženo na těžišťové osy y, z"],
  ["", "I", "z", "65.05", "cm", "4"],
  ["", "I", "yz", "-64.74", "cm", "4"],
  ["Úhel natočení hlavní osy", "α", "", "24.15", "°", "", "kladně ve směru hodinových ručiček"],
];

function Quantity({ base, sub, sup }) {
  return (
    <>
      {base}
      {sub && <sub className="static ml-px align-[-1px] text-[11px] leading-none">{sub}</sub>}
      {sup && <sup className="static ml-px align-[3px] text-[11px] leading-none">{sup}</sup>}
    </>
  );
}

function Group({ title, className, children }) {
  return (
    <section className={clsx("border-b border-[#a9a9e6] bg-[#f7f7f7]", className)}>
      <h3
        className="h-[18px] bg-[#d9e5ff] pl-[3px] text-[14px] leading-[18px] text-[#000066] [clip-path:polygon(0_0,calc(100%-12px)_0,100%_12px,100%_100%,0_100%)]"
      >
        {title}
      </h3>
      <div className="border-r border-[#a9a9e6]">{children}</div>
    </section>
  );
}

function Chevron({ d }) {
  return (
    <svg viewBox="0 0 10 10" className="size-2.5"><path d={d} fill="none" stroke="#555" strokeWidth="2" /></svg>
  );
}

function SectionTable() {
  const th = "h-5 overflow-hidden border-b border-r border-[#a0a0a0] p-0 pb-0.5 font-normal";
  const td = "h-[19px] overflow-hidden whitespace-nowrap border-b border-r border-[#a0a0a0] px-1 pb-0.5";
  return (
    <div className="flex border-l border-t border-[#a0a0a0] bg-[#efefef]">
      <div className="flex-1 overflow-hidden">
        <table className="w-[667px] table-fixed border-separate border-spacing-0 text-[13px] leading-4">
          <colgroup>
            <col className="w-[194px]" />
            <col className="w-[79px]" />
            <col className="w-[80px]" />
            <col className="w-[50px]" />
            <col className="w-[264px]" />
          </colgroup>
          <thead>
            <tr>
              <th className={th}>Popis</th>
              <th className={th}>Symbol</th>
              <th className={th}>Hodnota</th>
              <th className={clsx(th, "whitespace-nowrap text-left")}>Jednotka</th>
              <th className={th}>Komentář</th>
            </tr>
          </thead>
          <tbody>
            {sectionRows.map(([name, base, sub, value, unit, power, note], i) => (
              <tr key={i}>
                <td className={td}>{name}</td>
                <td className={td}><Quantity base={base} sub={sub} /></td>
                <td className={clsx(td, "text-right")}>{value}</td>
                <td className={td}><Quantity base={unit} sup={power} /></td>
                <td className={td}>{note}</td>
              </tr>
            ))}
          </tbody>
        </table>
      </div>
      <div className="flex w-5 shrink-0 flex-col items-center border-r border-[#a0a0a0] bg-[#f0f0f0]">
        <button aria-label="Nahoru" className="flex h-5 items-center"><Chevron d="M1 7l4-4 4 4" /></button>
        <div className="h-11 w-full bg-[#cdcdcd]" />
        <button aria-label="Dolů" className="mt-auto flex h-5 items-center"><Chevron d="M1 3l4 4 4-4" /></button>
      </div>
    </div>
  );
}

function SectionDialog() {
  return (
    <div
      role="dialog"
      aria-label="Informace o průřezu"
      className="absolute left-[567px] top-[102px] z-10 w-[942px] border border-[#6e6e6e] bg-[#f0f0f0] text-black shadow-[0_3px_16px_rgba(0,0,0,0.35)]"
    >
      <div className="flex h-8 items-center bg-white pb-0.5 pl-[3px] pr-[15px] font-['Open_Sans',sans-serif] text-[14px]">
        <h2>Informace o průřezu LA 100x65x10</h2>
        <button aria-label="Zavřít" className="ml-auto">
          <svg viewBox="0 0 13 13" className="size-[13px]"><path d="M.5.5l12 12M12.500.5l-12 12" stroke="#000" strokeWidth="1.200" /></svg>
        </button>
      </div>

      <div className="mx-2.5 flex gap-2.5 pt-[9px]">
        <div className="flex w-[560px] flex-col gap-3">
          <div className="flex gap-2.5">
            <Group title="Č." className="w-[70px]">
              <div className="h-[37px] pl-1 pt-1.5">
                <input
                  aria-label="Číslo průřezu"
                  defaultValue="2"
                  className="block h-6 w-[60px] border border-[#0078d7] bg-[#efefef] pb-0.5 pl-[2px] text-[13px] shadow-[inset_0_0_0_1px_#fff] outline-none"
                />
              </div>
            </Group>
            <Group title="Označení profilu" className="flex-1">
              <div className="h-[37px] pl-1 pt-1.5">
                <input
                  aria-label="Označení profilu"
                  readOnly
                  value="LA 100x65x10"
                  className="block h-6 w-[340px] border border-[#7a7a7a] bg-[#efefef] pb-0.5 pl-[2px] text-[13px] shadow-[inset_0_0_0_1px_#fff] outline-none"
                />
              </div>
            </Group>
          </div>

          <Group title="Průřezové charakteristiky">
            <div className="pb-px pr-0.5">
              <SectionTable />
              <div className="h-[19px] bg-[#e8eeee]" />
              <div className="flex h-5 items-center border-b border-[#a0a0a0] bg-[#f0f0f0]">
                <button aria-label="Vlevo" className="flex w-5 justify-center"><Chevron d="M7 1L3 5l4 4" /></button>
                <div className="h-full w-[414px] bg-[#cdcdcd]" />
                <button aria-label="Vpravo" className="ml-auto flex w-5 justify-center"><Chevron d="M3 1l4 4-4 4" /></button>
              </div>
            </div>
          </Group>
        </div>
        <div className="flex-1 overflow-hidden border-l border-t border-[#a0a0a0] bg-white">
          <PreviewDrawing />
        </div>
      </div>

      <div className="mx-2.5 mt-2.5 border-t border-[#a0a0a0] bg-white pb-px" />
      <div className="mx-2.5 flex gap-3 pb-[11px] pt-[13px] text-[13px]">
        {[["help", "Nápověda"], ["note", "Komentář"], ["units", "Jednotky"]].map(([name, label]) => (
          <button key={name} aria-label={label} className="flex h-[26px] w-[34px] items-center justify-center border border-[#adadad] bg-[#e1e1e1]">
            <Icon name={name} />
          </button>
        ))}
        <button className="ml-auto h-[26px] w-[98px] border-2 border-[#0078d7] bg-[#e1e1e1]">OK</button>
        <button className="h-[26px] w-[98px] border border-[#adadad] bg-[#e1e1e1]">Storno</button>
      </div>
    </div>
  );
}

/* ─── RESULT TABLE ─── */

const resultRows = [
  ["Poloha těžiště", "y", "S,0", "0.00", "cm", "", "vztaženo k nulovému bodu"],
  ["", "z", "S,0", "3.07", "cm", ""],
  ["Momenty setrvačnosti", "I", "y", "360.78", "cm", "4", "okolo os těžiště y, z"],
  ["", "I", "z", "301.46", "cm", "4"],
];

function ResultTable() {
  const cap = "h-[17px] border-b border-r border-[#6e6e6e] p-0 font-normal shadow-[inset_1px_1px_0_#fff]";
  const th = "h-[39px] border-b border-r border-[#a0a0a0] bg-[#f0f0f0] p-0 pb-[3px] align-bottom font-normal";
  const td = "h-[19px] whitespace-nowrap border-b border-r border-[#a0a0a0] bg-white px-1 pb-0.5";
  return (
    <table className="w-full table-fixed border-separate border-spacing-0 text-[13px] leading-4 text-black">
      <colgroup>
        <col className="w-[53px]" />
        <col className="w-[230px]" />
        <col className="w-[86px]" />
        <col className="w-[100px]" />
        <col className="w-[72px]" />
        <col />
      </colgroup>
      <thead>
        <tr>
          <td rowSpan={2} className="border-b border-r border-[#6e6e6e] bg-[#e1e1e1]" />
          <th className={clsx(cap, "bg-[#0078d7] text-white")}>A</th>
          {["B", "C", "D", "E"].map((c) => (
            <th key={c} className={clsx(cap, "bg-[#e1e1e1]")}>{c}</th>
          ))}
        </tr>
        <tr>
          {["Označení", "Symbol", "Hodnota", "Jednotka", "Komentář"].map((c) => (
            <th key={c} className={th}>{c}</th>
          ))}
        </tr>
      </thead>
      <tbody>
        {resultRows.map(([name, base, sub, value, unit, power, note], i) => (
          <tr key={i}>
            <td
              className={clsx(
                "h-[19px] border-b border-r border-[#6e6e6e] shadow-[inset_1px_1px_0_#fff]",
                i === 0 ? "bg-[#0078d7]" : "bg-[#e1e1e1]"
              )}
            />
            <td className={td}>{name}</td>
            <td className={td}><Quantity base={base} sub={sub} /></td>
            <td className={clsx(td, "text-right")}>{value}</td>
            <td className={td}><Quantity base={unit} sup={power} /></td>
            <td className={td}>{note}</td>
          </tr>
        ))}
        <tr>
          {[0, 1, 2, 3, 4, 5].map((c) => (
            <td key={c} className="h-[5px] border-r border-[#a0a0a0] bg-[#f0f0f0] p-0" />
          ))}
        </tr>
      </tbody>
    </table>
  );
}

function TablePanel() {
  const tab = "h-[19px] whitespace-nowrap rounded-b border border-t-0 border-[#646464] leading-4";
  return (
    <section className="flex h-[246px] shrink-0 flex-col bg-[#f0f0f0]">
      <PanelHeader title="4.1 Průřezové charakteristiky" />
      <div className="flex h-[31px] shrink-0 items-center bg-linear-to-b from-[#e9eef7] to-[#d0d4df]">
        {tableTools.map((item, i) => (
          <ToolItem key={i} item={item} />
        ))}
      </div>
      <div className="border border-[#646464] pb-1 pr-px">
        <div className="ml-0.5 mt-px border-b border-l border-t border-b-white border-l-[#a0a0a0] border-t-[#a0a0a0]">
          <ResultTable />
        </div>
      </div>
      <div className="-mt-px flex gap-px pl-px text-[13px] text-black">
        <button className={clsx(tab, "w-[159px] bg-[#f0f0f0]")}>Průřezové charakteristiky</button>
        <button className={clsx(tab, "w-[115px] bg-[#e1e1e1]")}>Statické momenty</button>
        <button className={clsx(tab, "w-[178px] bg-[#e1e1e1]")}>Výsečové statické momenty</button>
      </div>
      <div className="border-t border-[#d6d6d6]" />
    </section>
  );
}

/* ─── STATUS BAR ─── */

const modes = [
  ["UCHOP", "w-[56px]"],
  ["RASTR", "w-[47px]"],
  ["KARTEZ", "w-[64px]"],
  ["OUCHOP", "w-[66px]"],
  ["VLINIE", "w-[50px]"],
  ["DXF", "w-[33px]"],
];

function StatusBar() {
  return (
    <footer className="flex h-6 shrink-0 items-stretch border-t border-[#9fa3b2] bg-linear-to-b from-[#dfe2ea] via-[#aab0ba] to-[#c3c7cf] font-['Liberation_Sans',Arial,sans-serif] text-[13px] text-[#222]">
      <span className="flex-1 self-center pl-1 pt-1">Hotovo</span>
      <div className="flex w-[628px] gap-0.5 pt-0.5">
        {modes.map(([mode, width]) => (
          <button key={mode} className={clsx("border-l border-r border-t border-[#111] border-r-[#eee] pb-0.5", width)}>
            {mode}
          </button>
        ))}
        <div className="ml-[153px] w-[74px] border-l border-r border-[#8d929c]" />
      </div>
    </footer>
  );
}

export default function App() {
  return (
    <div className="flex h-screen flex-col overflow-hidden bg-[#cfd4de] font-['Open_Sans','Noto_Sans',sans-serif]">
      <TitleBar />
      <MenuBar />
      <div className="flex h-8 shrink-0">
        <Toolbar items={fileTools} />
        <Toolbar items={editTools} />
      </div>
      <div className="flex h-8 shrink-0">
        <Toolbar items={drawTools} />
        <Toolbar items={viewTools} />
        <Toolbar items={resultTools} />
      </div>

      <main className="flex min-h-0 flex-1 gap-1 border-t border-[#a3a8b3]">
        <Navigator />
        <div className="flex min-w-0 flex-1 flex-col gap-[5px] font-['Liberation_Sans',Arial,sans-serif]">
          <div className="relative ml-px min-h-0 flex-1 border-l border-t border-[#666] bg-white">
            <ModelDrawing />
            <SectionDialog />
          </div>
          <div className="font-['Open_Sans',sans-serif] [&_button]:font-['Liberation_Sans',Arial,sans-serif] [&_table]:font-['Liberation_Sans',Arial,sans-serif]">
            <TablePanel />
          </div>
        </div>
      </main>
      <StatusBar />
    </div>
  );
}
